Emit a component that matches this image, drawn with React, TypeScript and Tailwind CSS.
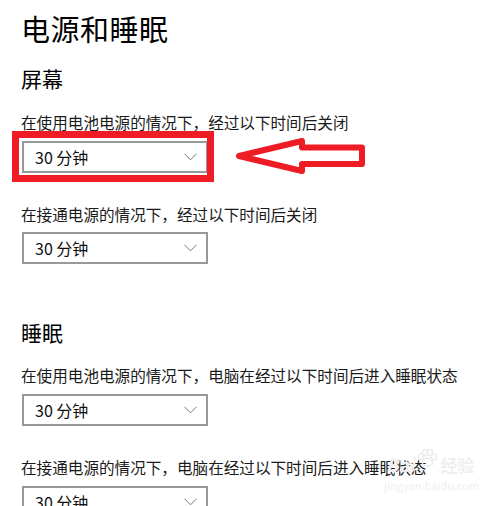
import React from "react";

const font = "font-['Noto_Sans_CJK_SC','Noto_Sans',sans-serif]";

function Dropdown({ className = "" }: { className?: string }) {
  return (
    <div
      className={`flex h-[32px] w-[186px] items-center justify-between border-2 border-[#999999] bg-white pl-[11px] pr-[8px] ${className}`}
    >
      <span className="text-[16px] leading-none text-[#111]">30 分钟</span>
      <svg width="13" height="8" viewBox="0 0 13 8" className="mr-[1px]">
        <path d="M0.5 0.8 L6.5 6.8 L12.5 0.8" fill="none" stroke="#777" strokeWidth="1" />
      </svg>
    </div>
  );
}

export default function App() {
  return (
    <div className={`relative h-[506px] w-[500px] overflow-hidden bg-white text-black ${font}`}>
      <div className="flex flex-col items-start pl-[21px] pt-[10px]">
        <h1 className="h-[36px] text-[29px] font-normal leading-[36px] tracking-[0.5px]">电源和睡眠</h1>
        <h2 className="mt-[17px] h-[30px] text-[21px] font-normal leading-[30px]">屏幕</h2>
        <p className="mt-[17px] h-[24px] text-[15.6px] leading-[24px] text-[#1a1a1a]">
          在使用电池电源的情况下，经过以下时间后关闭
        </p>
        <Dropdown className="mt-[7px] ml-[1px]" />
        <p className="mt-[29px] h-[24px] text-[15.6px] leading-[24px] text-[#1a1a1a]">
          在接通电源的情况下，经过以下时间后关闭
        </p>
        <Dropdown className="mt-[6px] ml-[1px]" />
        <h2 className="mt-[53px] h-[30px] text-[21px] font-normal leading-[30px]">睡眠</h2>
        <p className="mt-[16px] h-[24px] text-[15.6px] leading-[24px] text-[#1a1a1a]">
          在使用电池电源的情况下，电脑在经过以下时间后进入睡眠状态
        </p>
        <Dropdown className="mt-[7px] ml-[1px]" />
        <p className="mt-[29px] h-[24px] text-[15.6px] leading-[24px] text-[#1a1a1a]">
          在接通电源的情况下，电脑在经过以下时间后进入睡眠状态
        </p>
        <Dropdown className="mt-[7px] ml-[1px]" />
      </div>

      {/* red highlight box */}
      <div className="absolute left-[12px] top-[131px] h-[51px] w-[202px] border-[7px] border-[#ee1c25]" />

      {/* red arrow */}
      <svg className="absolute left-0 top-0" width="500" height="506" viewBox="0 0 500 506">
        <path
          d="M239 156 L302 141 L302 147.5 L362 147.5 L362 164 L302 164 L302 171 Z"
          fill="none"
          stroke="#ee1c25"
          strokeWidth="6"
          strokeLinejoin="round"
        />
      </svg>

      {/* faint watermark */}
      <div className="pointer-events-none absolute left-[384px] top-[449px] flex flex-col items-start">
        <div className="ml-[2px] flex items-end gap-[3px] leading-none text-[#efefef]">
          <span className="text-[18px] font-bold italic">Bai</span>
          <svg width="20" height="18" viewBox="0 0 20 18" className="mb-[6px]">
            <g fill="none" stroke="#ececec" strokeWidth="1.5">
              <ellipse cx="4" cy="8" rx="2.5" ry="3" />
              <ellipse cx="8" cy="3.5" rx="2.5" ry="3" />
              <ellipse cx="13" cy="3.5" rx="2.5" ry="3" />
              <ellipse cx="17" cy="8" rx="2.5" ry="3" />
              <path d="M10.5 9 C6 9 4 16 7 16.5 C9 17 12 17 14 16.5 C17 16 15 9 10.5 9 Z" />
            </g>
          </svg>
          <span className="text-[17px] font-bold">经验</span>
        </div>
        <span className="mt-[7px] text-[11px] leading-none text-[#efefef]">jingyan.baidu.com</span>
      </div>
    </div>
  );
}
